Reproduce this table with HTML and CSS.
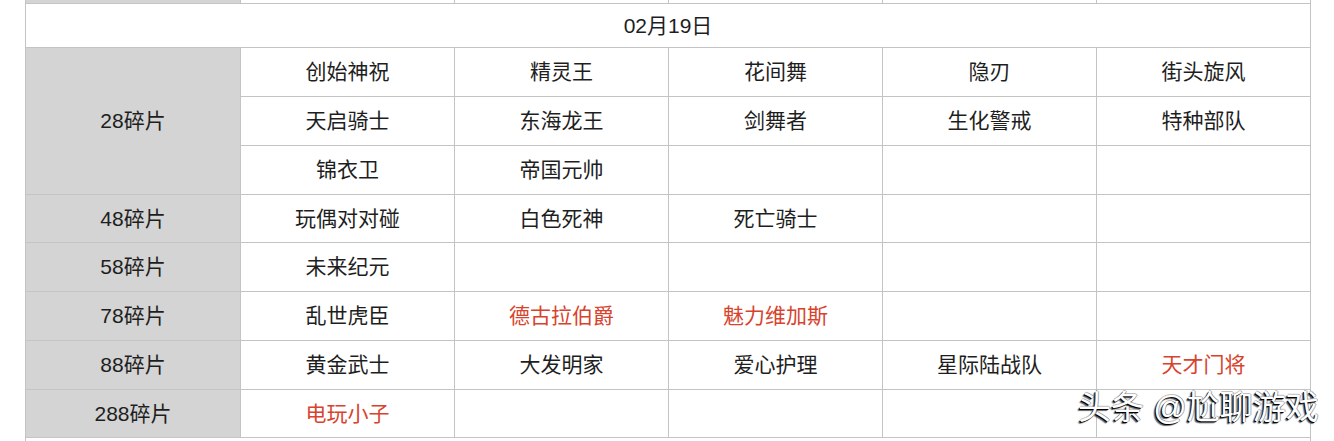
FILE: index.html
```html
<!DOCTYPE html>
<html lang="zh-CN">
<head>
<meta charset="utf-8">
<link rel="stylesheet" href="styles.css">
</head>
<body>
<div class="page">
<table class="grid">
  <colgroup>
    <col class="c-label"><col class="c"><col class="c"><col class="c"><col class="c"><col class="c">
  </colgroup>
  <tr class="r-top"><td class="label"></td><td></td><td></td><td></td><td></td><td></td></tr>
  <tr class="r-date"><td colspan="6">02月19日</td></tr>
  <tr><td class="label" rowspan="3">28碎片</td><td>创始神祝</td><td>精灵王</td><td>花间舞</td><td>隐刃</td><td>街头旋风</td></tr>
  <tr><td>天启骑士</td><td>东海龙王</td><td>剑舞者</td><td>生化警戒</td><td>特种部队</td></tr>
  <tr><td>锦衣卫</td><td>帝国元帅</td><td></td><td></td><td></td></tr>
  <tr class="r-short"><td class="label">48碎片</td><td>玩偶对对碰</td><td>白色死神</td><td>死亡骑士</td><td></td><td></td></tr>
  <tr><td class="label">58碎片</td><td>未来纪元</td><td></td><td></td><td></td><td></td></tr>
  <tr><td class="label">78碎片</td><td>乱世虎臣</td><td class="red">德古拉伯爵</td><td class="red">魅力维加斯</td><td></td><td></td></tr>
  <tr><td class="label">88碎片</td><td>黄金武士</td><td>大发明家</td><td>爱心护理</td><td>星际陆战队</td><td class="red">天才门将</td></tr>
  <tr class="r-short"><td class="label">288碎片</td><td class="red">电玩小子</td><td></td><td></td><td></td><td></td></tr>
  <tr class="r-next"><td colspan="6"></td></tr>
</table>
<div class="watermark">头条 @尬聊游戏</div>
</div>
</body>
</html>
```

FILE: styles.css
```css
html, body {
  margin: 0;
  padding: 0;
  background: #ffffff;
}
.page {
  position: relative;
  width: 1334px;
  height: 441px;
  overflow: hidden;
}
.grid {
  margin-left: 25px;
  margin-top: -2px;
  border-collapse: collapse;
  table-layout: fixed;
  width: 1286px;
  font-family: "Liberation Sans", "Noto Sans CJK SC", sans-serif;
  font-size: 21px;
  color: #1e1e1e;
}
.c-label { width: 215px; }
.c { width: 214px; }
.grid td {
  border: 1px solid #c4c4c4;
  height: 48px;
  padding: 0;
  text-align: center;
  vertical-align: middle;
  line-height: 24px;
}
.grid .r-top td { height: 4px; }
.grid .r-date td { height: 43px; font-size: 21px; }
.grid .r-short td { height: 47px; }
.grid td.label { background: #d4d4d4; }
.grid td.red { color: #d8432e; }
.grid .r-next td { height: 40px; }
.watermark {
  position: absolute;
  left: 1078px;
  top: 388px;
  font-family: "Liberation Sans", "Noto Sans CJK SC", sans-serif;
  font-size: 33px;
  line-height: 40px;
  color: #ffffff;
  white-space: nowrap;
  text-shadow: -1px 1px 0 #000, -2px 2px 1px rgba(0,0,0,0.6), 1px 0 0 rgba(0,0,0,0.35), 0 -1px 0 rgba(0,0,0,0.25);
}
```
